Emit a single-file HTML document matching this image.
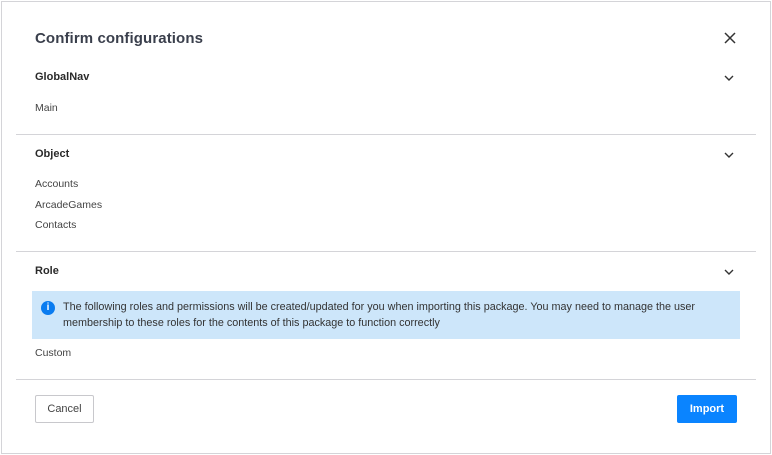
<!DOCTYPE html>
<html><head><meta charset="utf-8"><style>
*{margin:0;padding:0;box-sizing:border-box}
body{width:772px;height:455px;background:#fff;font-family:"Liberation Sans",sans-serif;position:relative;overflow:hidden;color:#333}
.frame{position:absolute;left:1px;top:1px;width:770px;height:453px;border:1px solid #d4d4d8}
.t{position:absolute;white-space:nowrap}
.title{left:35px;top:30px;font-size:15px;font-weight:bold;color:#3a3f4c;letter-spacing:.1px}
.h{left:35px;font-size:11px;font-weight:bold;color:#2a2a2a}
.i{left:35px;font-size:10.5px;color:#444}
.hr{position:absolute;left:16px;width:740px;height:1px;background:#d4d4d8}
.chev{position:absolute;left:724px;width:10px;height:6px}
.info{position:absolute;left:32px;top:291px;width:708px;height:48px;background:#cde6fa}
.info .ic{position:absolute;left:9px;top:10px;width:14px;height:14px;border-radius:50%;background:#0a7cf0;color:#fff;font-size:10px;font-weight:bold;text-align:center;line-height:14px}
.info .tx{position:absolute;left:31px;top:8px;font-size:10.8px;line-height:16px;color:#333}
.btn{position:absolute;top:395px;height:28px;font-size:11px;text-align:center;line-height:26px;border-radius:2px}
</style></head><body>
<div class="frame"></div>
<div class="t title">Confirm configurations</div>
<svg style="position:absolute;left:724px;top:32px" width="12" height="12" viewBox="0 0 12 12"><path d="M1 1L11 11M11 1L1 11" stroke="#333" stroke-width="1.5"/></svg>
<div class="t h" style="top:71px">GlobalNav</div>
<svg class="chev" style="top:75px" viewBox="0 0 10 6"><path d="M1 1L5 5L9 1" stroke="#333" stroke-width="1.4" fill="none"/></svg>
<div class="t i" style="top:102px">Main</div>
<div class="hr" style="top:134px"></div>
<div class="t h" style="top:148px">Object</div>
<svg class="chev" style="top:152px" viewBox="0 0 10 6"><path d="M1 1L5 5L9 1" stroke="#333" stroke-width="1.4" fill="none"/></svg>
<div class="t i" style="top:178px">Accounts</div>
<div class="t i" style="top:199px">ArcadeGames</div>
<div class="t i" style="top:219px">Contacts</div>
<div class="hr" style="top:251px"></div>
<div class="t h" style="top:265px">Role</div>
<svg class="chev" style="top:269px" viewBox="0 0 10 6"><path d="M1 1L5 5L9 1" stroke="#333" stroke-width="1.4" fill="none"/></svg>
<div class="info"><div class="ic">i</div><div class="tx">The following roles and permissions will be created/updated for you when importing this package. You may need to manage the user<br>membership to these roles for the contents of this package to function correctly</div></div>
<div class="t i" style="top:347px">Custom</div>
<div class="hr" style="top:379px"></div>
<div class="btn" style="left:35px;width:59px;border:1px solid #c8c8cc;color:#444">Cancel</div>
<div class="btn" style="left:677px;width:60px;background:#0a84ff;color:#fff;font-weight:bold;line-height:28px">Import</div>
</body></html>
